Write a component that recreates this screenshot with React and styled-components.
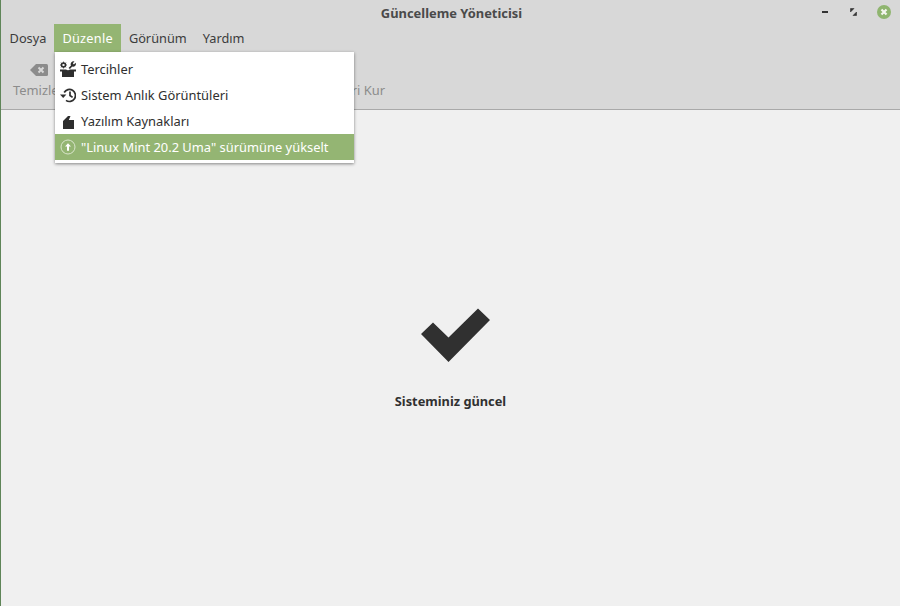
import React from 'react';
import styled, { createGlobalStyle } from 'styled-components';

const GlobalStyle = createGlobalStyle`
html, body {
  margin: 0;
  padding: 0;
  background: #f0f0f0;
}
#root {
  width: 900px;
  height: 606px;
  overflow: hidden;
}
`

const Window = styled.div`
position: relative;
width: 900px;
height: 606px;
display: flex;
flex-direction: column;
box-sizing: border-box;
border-left: 1px solid #5f8558;
font-family: 'Noto Sans', 'Open Sans', sans-serif;
font-size: 12.9px;
color: #303030;
background: #f0f0f0;
`

const TitleBar = styled.div`
position: relative;
height: 24px;
flex: none;
box-sizing: border-box;
display: flex;
align-items: center;
justify-content: center;
background: #d8d8d8;
font-weight: 700;
font-size: 12.9px;
color: #4a4a4a;
padding: 1px 0 0 2px;
`

const WindowButtons = styled.div`
position: absolute;
right: 9px;
top: 5px;
display: flex;
align-items: center;
gap: 20px;
`

const MinimizeIcon = () => <svg width="8" height="4" viewBox="0 0 8 4">
    <rect x="1" y="1" width="6" height="2" fill="#333" />
</svg>

const RestoreIcon = () => <svg width="8" height="8" viewBox="0 0 8 8">
    <path d="M1.5 0.5 H5 L1.5 4 Z M7.5 7.5 H4 L7.5 4 Z" fill="#333" stroke="#333" strokeWidth="0.6" />
</svg>

const CloseIcon = () => <svg width="14" height="14" viewBox="0 0 14 14">
    <circle cx="7" cy="7" r="7" fill="#8fb56f" />
    <path d="M4.5 4.5 L9.5 9.5 M9.5 4.5 L4.5 9.5" stroke="#f4f6ef" strokeWidth="2.2" />
</svg>

const MenuBar = styled.div`
height: 28px;
flex: none;
display: flex;
padding-left: 0.6px;
background: #d8d8d8;
font-size: 12.75px;
`

const MenuItem = styled.div`
display: flex;
align-items: center;
padding: 0 8px;
color: ${props => props.$active ? '#ffffff' : '#3c3c3c'};
background: ${props => props.$active ? '#94b573' : 'transparent'};
letter-spacing: ${props => props.$active ? '0.25px' : '0'};
`

const ToolBar = styled.div`
height: 58px;
flex: none;
box-sizing: border-box;
display: flex;
justify-content: space-between;
padding: 8px 515px 0 12px;
background: #d8d8d8;
border-bottom: 1px solid #a9a9a9;
`

const ToolButton = styled.div`
display: flex;
flex-direction: column;
align-items: center;
gap: 1px;
color: #8c8c8c;
white-space: nowrap;
`

const ToolIcon = styled.div`
height: 20px;
display: flex;
align-items: center;
margin-left: 7px;
`

const BackspaceIcon = () => <svg width="18" height="12" viewBox="0 0 18 12">
    <path d="M6 0 H16.5 Q18 0 18 1.5 V10.5 Q18 12 16.5 12 H6 L0 6 Z" fill="#8c8c8c" />
    <path d="M8.5 3.5 L13.5 8.5 M13.5 3.5 L8.5 8.5" stroke="#d8d8d8" strokeWidth="2" />
</svg>

const Content = styled.div`
flex: 1;
display: flex;
flex-direction: column;
align-items: center;
padding-top: 198px;
`

const CheckWrap = styled.div`
height: 56px;
margin-left: 10px;
`

const StatusText = styled.div`
margin-top: 28px;
font-weight: 700;
font-size: 12.8px;
color: #303030;
`

const Menu = styled.div`
position: absolute;
left: 54px;
top: 52px;
width: 299px;
padding: 4px 0 0;
height: 111px;
box-sizing: border-box;
background: #ffffff;
box-shadow: 0 1px 3px rgba(0, 0, 0, 0.45);
`

const DropdownItem = styled.div`
height: 26px;
display: flex;
align-items: center;
gap: 5px;
padding-left: 5px;
color: ${props => props.$active ? '#ffffff' : '#303030'};
background: ${props => props.$active ? '#94b573' : 'transparent'};
`

const ItemIcon = styled.div`
width: 16px;
height: 16px;
flex: none;
display: flex;
align-items: center;
justify-content: center;
`

const PrefsIcon = () => <svg width="16" height="16" viewBox="0 0 16 16">
    <path d="M0 8.5 H6 Q8 10 10 8.5 H16 V10.5 H14 V16 H2 V10.5 H0 Z" fill="#2e2e2e" />
    <circle cx="3.5" cy="4" r="2" fill="none" stroke="#2e2e2e" strokeWidth="1.6" />
    <path d="M3.5 0.6 V7.4 M0.1 4 H6.9 M1.1 1.6 L5.9 6.4 M5.9 1.6 L1.1 6.4" stroke="#2e2e2e" strokeWidth="0.8" />
    <circle cx="3.5" cy="4" r="1.1" fill="#ffffff" />
    <path d="M8.5 7 L11 4.5 A2.8 2.8 0 0 1 14.5 0.6 L12.8 2.3 L13.9 3.4 L15.6 1.7 A2.8 2.8 0 0 1 12.2 5.6 L10 8 Z" fill="#2e2e2e" />
</svg>

const HistoryIcon = () => <svg width="16" height="16" viewBox="0 0 16 16" fill="none" stroke="#2e2e2e" strokeWidth="1.7">
    <path d="M4.2 5.5 A6 6 0 1 1 6 13.4" />
    <path d="M0 7.5 H6.4 L3.2 11 Z" fill="#2e2e2e" stroke="none" />
    <path d="M10 4.5 V8.5 L12.6 10.4" />
</svg>

const SourcesIcon = () => <svg width="16" height="16" viewBox="0 0 16 16">
    <path d="M3 8 L8 3 H10.5 L8.8 7 H14 V16 H3 Z" fill="#2e2e2e" />
</svg>

const UpgradeIcon = () => <svg width="16" height="16" viewBox="0 0 16 16">
    <circle cx="8" cy="8" r="7" fill="none" stroke="#d9e5cb" strokeWidth="1" />
    <path d="M8 4.2 L11 7.6 H9 V11.8 H7 V7.6 H5 Z" fill="#ffffff" />
</svg>

const CheckIcon = () => <svg width="70" height="56" viewBox="0 0 70 56">
    <path d="M0 26 L12 14.5 L27.5 29.5 L57 0.5 L69 12 L27.5 54 Z" fill="#303030" />
</svg>

const App = () => {
    return <Window>
        <GlobalStyle />
        <TitleBar>
            Güncelleme Yöneticisi
            <WindowButtons>
                <MinimizeIcon />
                <RestoreIcon />
                <CloseIcon />
            </WindowButtons>
        </TitleBar>
        <MenuBar>
            <MenuItem>Dosya</MenuItem>
            <MenuItem $active>Düzenle</MenuItem>
            <MenuItem>Görünüm</MenuItem>
            <MenuItem>Yardım</MenuItem>
        </MenuBar>
        <ToolBar>
            <ToolButton>
                <ToolIcon><BackspaceIcon /></ToolIcon>
                Temizle
            </ToolButton>
            <ToolButton>
                <ToolIcon />
                Güncellemeleri Kur
            </ToolButton>
        </ToolBar>
        <Content>
            <CheckWrap><CheckIcon /></CheckWrap>
            <StatusText>Sisteminiz güncel</StatusText>
        </Content>
        <Menu>
            <DropdownItem><ItemIcon><PrefsIcon /></ItemIcon>Tercihler</DropdownItem>
            <DropdownItem><ItemIcon><HistoryIcon /></ItemIcon>Sistem Anlık Görüntüleri</DropdownItem>
            <DropdownItem><ItemIcon><SourcesIcon /></ItemIcon>Yazılım Kaynakları</DropdownItem>
            <DropdownItem $active><ItemIcon><UpgradeIcon /></ItemIcon>"Linux Mint 20.2 Uma" sürümüne yükselt</DropdownItem>
        </Menu>
    </Window>
};

export default App;
